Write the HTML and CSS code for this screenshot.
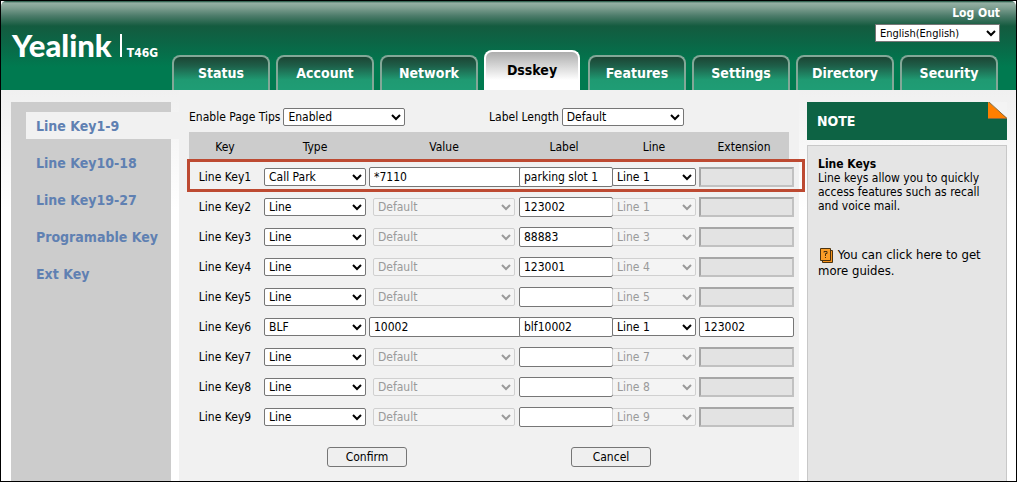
FILE: index.html
```html
<!DOCTYPE html>
<html lang="en">
<head>
<meta charset="utf-8">
<title>Yealink T46G - Dsskey</title>
<link rel="stylesheet" href="styles.css">
</head>
<body>
<div class="page">
  <header class="header">
    <div class="brand"><span class="logo">Yealink</span><span class="divider"></span><span class="model">T46G</span></div>
    <div class="header-side">
      <div class="account">
        <a class="logout" href="#">Log Out</a>
        <select class="language" aria-label="Language"><option>English(English)</option></select>
      </div>
      <nav class="tabs">
        <a class="tab" href="#">Status</a>
        <a class="tab" href="#">Account</a>
        <a class="tab" href="#">Network</a>
        <a class="tab active" href="#">Dsskey</a>
        <a class="tab" href="#">Features</a>
        <a class="tab" href="#">Settings</a>
        <a class="tab" href="#">Directory</a>
        <a class="tab" href="#">Security</a>
      </nav>
    </div>
  </header>
  <div class="body">
    <nav class="sidebar">
      <a class="side-link current" href="#">Line Key1-9</a>
      <a class="side-link" href="#">Line Key10-18</a>
      <a class="side-link" href="#">Line Key19-27</a>
      <a class="side-link" href="#">Programable Key</a>
      <a class="side-link" href="#">Ext Key</a>
    </nav>
    <main class="content">
      <form>
        <div class="options">
          <div class="option"><label for="tips">Enable Page Tips</label><select id="tips"><option>Enabled</option></select></div>
          <div class="option"><label for="length">Label Length</label><select id="length"><option>Default</option></select></div>
        </div>
        <table class="keys">
          <colgroup><col class="c-key"><col class="c-type"><col class="c-value"><col class="c-std"><col class="c-std"><col class="c-std"></colgroup>
          <thead><tr><th>Key</th><th>Type</th><th>Value</th><th>Label</th><th>Line</th><th>Extension</th></tr></thead>
          <tbody>
            <tr class="marked"><td>Line Key1</td><td><select class="type" aria-label="Type 1"><option>Call Park</option></select></td><td class="start"><input class="value" aria-label="Value 1" value="*7110"></td><td class="start"><input class="label" aria-label="Label 1" value="parking slot 1"></td><td><select class="line" aria-label="Line 1"><option>Line 1</option></select></td><td class="start"><input class="ext" aria-label="Extension 1" disabled></td></tr>
            <tr><td>Line Key2</td><td><select class="type" aria-label="Type 2"><option>Line</option></select></td><td><select class="value-select" aria-label="Value 2" disabled><option>Default</option></select></td><td class="start"><input class="label" aria-label="Label 2" value="123002"></td><td><select class="line" aria-label="Line 2" disabled><option>Line 1</option></select></td><td class="start"><input class="ext" aria-label="Extension 2" disabled></td></tr>
            <tr><td>Line Key3</td><td><select class="type" aria-label="Type 3"><option>Line</option></select></td><td><select class="value-select" aria-label="Value 3" disabled><option>Default</option></select></td><td class="start"><input class="label" aria-label="Label 3" value="88883"></td><td><select class="line" aria-label="Line 3" disabled><option>Line 3</option></select></td><td class="start"><input class="ext" aria-label="Extension 3" disabled></td></tr>
            <tr><td>Line Key4</td><td><select class="type" aria-label="Type 4"><option>Line</option></select></td><td><select class="value-select" aria-label="Value 4" disabled><option>Default</option></select></td><td class="start"><input class="label" aria-label="Label 4" value="123001"></td><td><select class="line" aria-label="Line 4" disabled><option>Line 4</option></select></td><td class="start"><input class="ext" aria-label="Extension 4" disabled></td></tr>
            <tr><td>Line Key5</td><td><select class="type" aria-label="Type 5"><option>Line</option></select></td><td><select class="value-select" aria-label="Value 5" disabled><option>Default</option></select></td><td class="start"><input class="label" aria-label="Label 5"></td><td><select class="line" aria-label="Line 5" disabled><option>Line 5</option></select></td><td class="start"><input class="ext" aria-label="Extension 5" disabled></td></tr>
            <tr><td>Line Key6</td><td><select class="type" aria-label="Type 6"><option>BLF</option></select></td><td class="start"><input class="value" aria-label="Value 6" value="10002"></td><td class="start"><input class="label" aria-label="Label 6" value="blf10002"></td><td><select class="line" aria-label="Line 6"><option>Line 1</option></select></td><td class="start"><input class="ext" aria-label="Extension 6" value="123002"></td></tr>
            <tr><td>Line Key7</td><td><select class="type" aria-label="Type 7"><option>Line</option></select></td><td><select class="value-select" aria-label="Value 7" disabled><option>Default</option></select></td><td class="start"><input class="label" aria-label="Label 7"></td><td><select class="line" aria-label="Line 7" disabled><option>Line 7</option></select></td><td class="start"><input class="ext" aria-label="Extension 7" disabled></td></tr>
            <tr><td>Line Key8</td><td><select class="type" aria-label="Type 8"><option>Line</option></select></td><td><select class="value-select" aria-label="Value 8" disabled><option>Default</option></select></td><td class="start"><input class="label" aria-label="Label 8"></td><td><select class="line" aria-label="Line 8" disabled><option>Line 8</option></select></td><td class="start"><input class="ext" aria-label="Extension 8" disabled></td></tr>
            <tr><td>Line Key9</td><td><select class="type" aria-label="Type 9"><option>Line</option></select></td><td><select class="value-select" aria-label="Value 9" disabled><option>Default</option></select></td><td class="start"><input class="label" aria-label="Label 9"></td><td><select class="line" aria-label="Line 9" disabled><option>Line 9</option></select></td><td class="start"><input class="ext" aria-label="Extension 9" disabled></td></tr>
          </tbody>
        </table>
        <div class="actions"><button type="button">Confirm</button><button type="button">Cancel</button></div>
      </form>
    </main>
    <aside class="note">
      <h2 class="note-title">NOTE
        <svg class="fold" viewBox="0 0 19 17" width="19" height="17"><path d="M0 0H19V17Z" fill="#f4f4f4"/><path d="M0 0L19 16H0Z" fill="#ff7f00"/><path d="M1 0L19 16.500H0" fill="none" stroke="#8a6a3a"/></svg>
      </h2>
      <div class="note-body">
        <h3>Line Keys</h3>
        <p>Line keys allow you to quickly access features such as recall and voice mail.</p>
        <a class="guide" href="#"><svg class="book" viewBox="0 0 14 15" width="14" height="15"><path d="M2.500 2.500H12.500V14.500H2.500Z" fill="#f7941d" stroke="#4a3210"/><path d="M.5 .5H10.500V12.500H.5Z" fill="#f99d27" stroke="#4a3210"/><path d="M4 4.500V3.500H7V5.500H5.500V8M5.500 9V10" fill="none" stroke="#4a3210"/></svg> You can click here to get more guides.</a>
      </div>
    </aside>
  </div>
</div>
</body>
</html>
```
FILE: styles.css
```css
* { box-sizing: border-box; }
body { margin: 0; font: 12px/14px "DejaVu Sans Condensed", "DejaVu Sans", sans-serif; color: #000; }
a { color: inherit; text-decoration: none; }
.page { min-height: 100vh; display: flex; flex-direction: column; border: 1px solid #000; background: #fff; }
.header { display: flex; justify-content: space-between; padding: 0 16px 0 11px; border-radius: 5px 5px 0 0;
  background: linear-gradient(#174d3b 0, #95b0a4 2px, #7d9e90 7px, #4b7b69 15px, #145b3f 25px, #0b6646 42px, #007a50 66px); }
.brand { display: flex; align-items: baseline; padding-top: 26px; color: #fff; }
.logo { font: 900 31px/36px Lato, sans-serif; }
.divider { width: 2px; height: 23px; margin: 0 5px 0 8px; background: #fff; }
.model { font-weight: bold; }
.header-side { display: flex; flex-direction: column; justify-content: space-between; }
.account { display: flex; flex-direction: column; align-items: flex-end; gap: 4px; padding-top: 5px; }
.logout { color: #fff; font-weight: bold; }
.tabs { display: flex; align-items: flex-end; gap: 6px; margin: 8px 2px 0 0; }
.tab { width: 98px; height: 35px; padding-top: 6px; border: 2px solid #83a898; border-bottom: 0; border-radius: 8px 8px 0 0;
  background: linear-gradient(#1c4534 0, #1e5f49 9px, #1f9a72 23px, #1f9d75); color: #fff; font-weight: bold; font-size: 14px; line-height: 20px; text-align: center; }
.tab.active { height: 40px; width: 96px; margin-right: 2px; padding-top: 8px; border-color: #fff; background: linear-gradient(#adadad, #fff 28px); color: #000; }
select, input, button { margin: 0; font: 12px "DejaVu Sans Condensed", "DejaVu Sans", sans-serif; }
select { height: 18px; padding: 0; border: 1px solid #767676; border-radius: 2px; background-color: #fff; color: #000; }
select:disabled { opacity: 1; border-color: #d0d0d0; background-color: #f4f4f4; color: #9a9a9a; }
.language { width: 125px; font-size: 11px; border-radius: 0; }
.body { flex: 1; display: flex; padding: 0 9px 0 10px; background: linear-gradient(#f0f0f0, #fff 120px); }
.sidebar { width: 160px; margin-top: 12px; padding: 10px 0 0 15px; background: #ccc; }
.side-link { display: block; height: 27px; margin-bottom: 10px; padding-left: 10px; color: #5f80b2; font-weight: bold; font-size: 14px; line-height: 28px; }
.side-link.current { margin-right: -8px; background: #f1f1f1; }
.content { flex: 1; margin: 0 8px; padding: 18px 10px 14px; background: #f1f1f1; }
.options { display: grid; grid-template-columns: 1fr 1fr; margin-bottom: 6px; }
.option { display: flex; align-items: center; gap: 3px; }
.option select { width: 122px; }
.keys { width: 100%; table-layout: fixed; border-collapse: collapse; text-align: center; }
.c-key { width: 12%; }
.c-type { width: 18%; }
.c-value { width: 25%; }
.c-std { width: 15%; }
.keys th, .keys td { height: 30px; padding: 0; font-weight: normal; white-space: nowrap; }
.keys th { background: #ccc; }
.keys select, .keys input { display: block; margin: 0 auto; }
.keys .start input { margin: 0; }
.marked { position: relative; }
.marked::after { content: ""; position: absolute; inset: -3px -16px 0 -2px; border: 3px solid #bd4a32; pointer-events: none; }
.type { width: 102px; }
.value-select { width: 142px; }
input { height: 20px; padding: 0 4px; border: 1px solid #767676; border-radius: 2px; background: #fff; }
.value { width: 152px; }
.label { position: relative; width: 94px; }
.line { position: relative; width: 84px; }
.ext { width: 95px; }
input:disabled { border: 2px solid; border-color: #a6a6a6 #c1c1c1 #c1c1c1 #a6a6a6; border-radius: 0; background: #e3e3e3; }
.actions { display: flex; justify-content: center; gap: 164px; margin-top: 15px; }
button { width: 80px; height: 20px; padding: 0; border: 1px solid #767676; border-radius: 3px; background: #efefef; color: #000; }
.note { display: flex; flex-direction: column; width: 200px; margin-top: 12px; }
.note-title { position: relative; margin: 0 0 5px; padding: 9px 10px; background: #0d6344; color: #fff; font-size: 14px; line-height: 20px; }
.fold { position: absolute; top: 0; right: 0; }
.note-body { flex: 1; padding: 11px 16px 10px 10px; border: 1px solid #c8c8c8; border-bottom: 0; background: #e5e5e5; }
.note h3 { margin: 0; font-size: 12px; line-height: 14px; }
.note p { margin: 0 0 34px; }
.guide { display: block; font-size: 13px; line-height: 16px; }
.book { margin-left: 2px; vertical-align: -4px; }
```
